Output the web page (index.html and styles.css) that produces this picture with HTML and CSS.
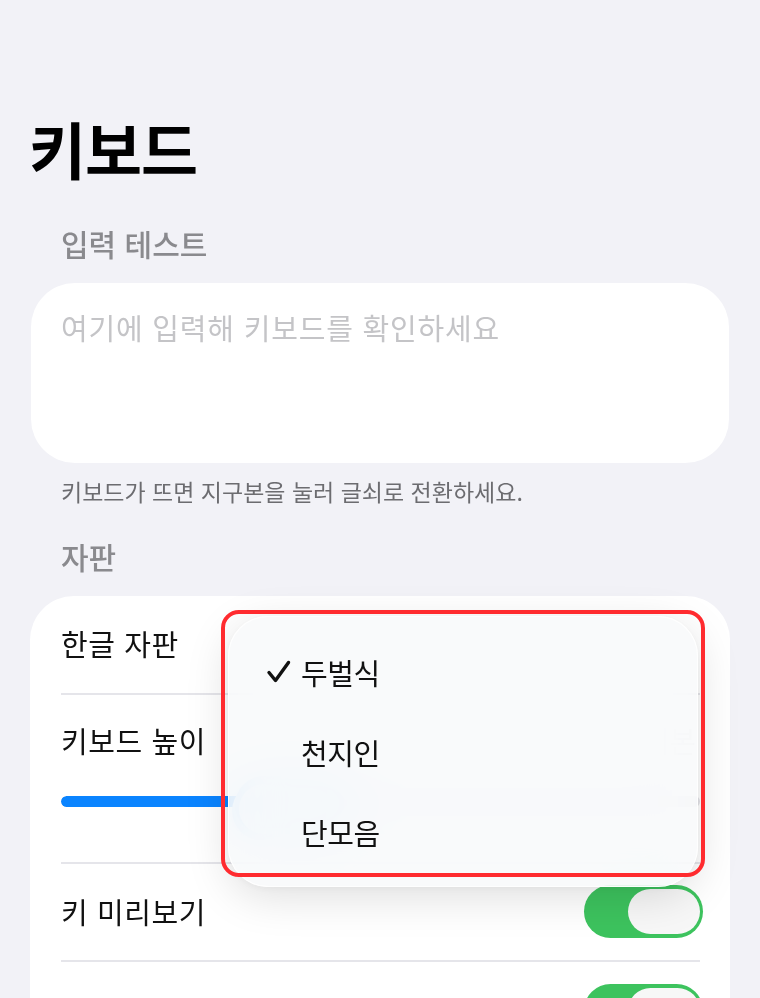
FILE: index.html
```html
<!DOCTYPE html>
<html lang="ko">
<head>
<meta charset="utf-8">
<title>키보드</title>
<link rel="stylesheet" href="styles.css">
</head>
<body>
<div class="page">
  <h1 class="title">키보드</h1>

  <div class="section-label">입력 테스트</div>
  <div class="card input-card">
    <div class="placeholder">여기에 입력해 키보드를 확인하세요</div>
  </div>
  <div class="footnote">키보드가 뜨면 지구본을 눌러 글쇠로 전환하세요.</div>

  <div class="section-label label-layout">자판</div>
  <div class="card list-card">
    <div class="row row-simple">
      <span class="row-text">한글 자판</span>
    </div>
    <div class="row row-slider">
      <div class="row-head">
        <span class="row-text">키보드 높이</span>
        <span class="row-value">기본</span>
      </div>
      <div class="slider">
        <div class="slider-track">
          <div class="slider-fill"></div>
        </div>
        <div class="slider-thumb"></div>
      </div>
    </div>
    <div class="row row-toggle">
      <span class="row-text">키 미리보기</span>
      <span class="toggle"><span class="knob"></span></span>
    </div>
    <div class="row row-toggle row-last">
      <span class="row-spacer"></span>
      <span class="toggle"><span class="knob"></span></span>
    </div>

    <div class="menu">
      <div class="menu-item">
        <span class="menu-check">
          <svg width="26" height="24" viewBox="0 0 26 24"><path d="M3 12.5 L9.5 20.5 L22.5 2.5" fill="none" stroke="#111" stroke-width="3.4" stroke-linecap="round" stroke-linejoin="round"/></svg>
        </span>
        <span class="menu-text">두벌식</span>
      </div>
      <div class="menu-item">
        <span class="menu-check"></span>
        <span class="menu-text">천지인</span>
      </div>
      <div class="menu-item">
        <span class="menu-check"></span>
        <span class="menu-text">단모음</span>
      </div>
    </div>
    <div class="annotation"></div>
  </div>
</div>
</body>
</html>
```

FILE: styles.css
```css
* { box-sizing: border-box; }

html, body {
  margin: 0;
  padding: 0;
  background: #f2f2f7;
}

body {
  font-family: "Noto Sans CJK KR", "Noto Sans", sans-serif;
  color: #111;
  width: 760px;
  height: 998px;
  overflow: hidden;
}

.page {
  padding: 0 31px 0 31px;
}

.title {
  margin: 0 0 0 -2px;
  padding-top: 111px;
  font-size: 62px;
  line-height: 74px;
  font-weight: 700;
  letter-spacing: -1px;
  color: #000;
}

.section-label {
  margin-top: 40px;
  padding-left: 30px;
  font-size: 30px;
  line-height: 36px;
  font-weight: 500;
  letter-spacing: 0;
  color: #8a8a8e;
}

.label-layout {
  margin-top: 33px;
}

.card {
  background: #fff;
  border-radius: 44px;
}

.input-card {
  margin-top: 22px;
  height: 180px;
  padding: 27px 30px 0 30px;
}

.placeholder {
  font-size: 29px;
  line-height: 35px;
  letter-spacing: 0.8px;
  color: #c4c4c7;
}

.footnote {
  margin-top: 14px;
  padding-left: 30px;
  font-size: 23px;
  line-height: 28px;
  letter-spacing: 0;
  color: #6c6c70;
}

.list-card {
  position: relative;
  margin-top: 22px;
  margin-left: -1px;
  margin-right: -1px;
  height: 500px;
  border-radius: 44px 44px 0 0;
}

.row {
  margin: 0 30px 0 31px;
  border-bottom: 2px solid #e5e5ea;
  display: flex;
  align-items: center;
}

.row-text {
  font-size: 29px;
  line-height: 35px;
  letter-spacing: 0.6px;
  color: #111;
}

.row-simple {
  height: 99px;
  padding-bottom: 3px;
}

.row-slider {
  display: block;
  height: 169px;
  padding-top: 28px;
}

.row-head {
  display: flex;
  justify-content: space-between;
  align-items: center;
}

.row-value {
  font-size: 29px;
  line-height: 35px;
  color: #dedee2;
  margin-right: 4px;
}

.slider {
  position: relative;
  margin-top: 38px;
  height: 11px;
}

.slider-track {
  height: 11px;
  border-radius: 6px;
  background: #e3e3e8;
  overflow: hidden;
}

.slider-fill {
  width: 250px;
  height: 100%;
  background: #0a84ff;
  border-radius: 6px;
}

.slider-thumb {
  position: absolute;
  left: 178px;
  top: -12px;
  width: 112px;
  height: 50px;
  border-radius: 25px;
  background: #f1f8ff;
  box-shadow: 0 -4px 0 4px #a9d4ff, -3px 2px 0 4px #c2e2ff, 0 6px 16px rgba(10, 132, 255, 0.25);
}

.row-toggle {
  height: 98px;
  justify-content: space-between;
  padding-bottom: 2px;
}

.row-last {
  border-bottom: none;
}

.row-spacer {
  display: block;
  width: 1px;
  height: 35px;
}

.toggle {
  position: relative;
  display: block;
  width: 119px;
  height: 53px;
  border-radius: 27px;
  background: #3dc35e;
  margin-right: -3px;
}

.knob {
  position: absolute;
  right: 3px;
  top: 4px;
  width: 72px;
  height: 45px;
  border-radius: 23px;
  background: #f7f7f7;
}

.menu {
  position: absolute;
  left: 198px;
  top: 20px;
  width: 470px;
  height: 271px;
  padding-top: 15px;
  border-radius: 40px;
  background: rgba(248, 249, 250, 0.82);
  -webkit-backdrop-filter: blur(24px) saturate(1.4);
  backdrop-filter: blur(24px) saturate(1.4);
  border: 1px solid rgba(255, 255, 255, 0.9);
  box-shadow: 0 10px 44px rgba(0, 0, 0, 0.13), 0 2px 8px rgba(0, 0, 0, 0.04);
}

.menu-item {
  display: flex;
  align-items: center;
  height: 80px;
  padding-left: 37px;
}

.menu-check {
  width: 35px;
  height: 24px;
  display: flex;
  align-items: center;
}

.menu-text {
  font-size: 29px;
  line-height: 35px;
  letter-spacing: -0.4px;
  color: #111;
}

.annotation {
  position: absolute;
  left: 191px;
  top: 14px;
  width: 484px;
  height: 267px;
  border: 4px solid #ff2b2f;
  border-radius: 18px;
  pointer-events: none;
}
```
